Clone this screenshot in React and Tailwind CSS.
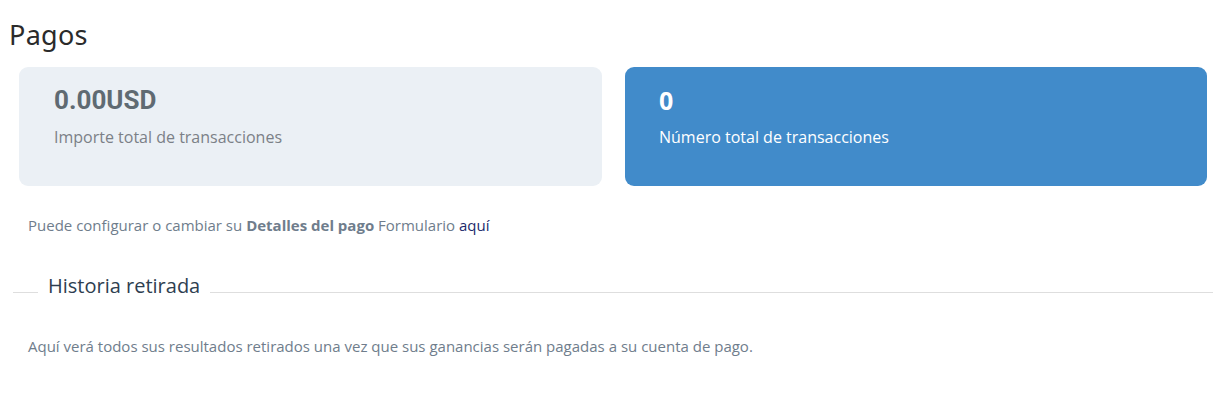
export default function App() {
  return (
    <div className="bg-white w-[1214px] h-[400px] overflow-hidden" style={{ fontFamily: '"Open Sans", sans-serif' }}>
      <h1 className="pl-[9px] pt-[18px] text-[27px] leading-[33px] text-[#2b2b2b] tracking-[0.3px]" style={{ fontFamily: '"Noto Sans", sans-serif' }}>
        Pagos
      </h1>
      <div className="flex gap-[23px] pl-[19px] pr-[7px] mt-[16px]">
        <div className="flex-1 h-[119px] rounded-[9px] bg-[#ebf0f5] pl-[35px] pt-[18px]">
          <div className="text-[26px] leading-[30px] font-bold text-[#5f6a72]" style={{ fontFamily: 'Roboto, sans-serif' }}>0.00USD</div>
          <div className="mt-[11px] text-[16px] leading-[22px] text-[#7b8087]">Importe total de transacciones</div>
        </div>
        <div className="flex-1 h-[119px] rounded-[9px] bg-[#418bca] pl-[34px] pt-[18px]">
          <div className="text-[25px] leading-[30px] font-bold text-white">0</div>
          <div className="mt-[11px] text-[16px] leading-[22px] text-white">Número total de transacciones</div>
        </div>
      </div>
      <p className="pl-[28px] mt-[29px] text-[15px] leading-[21px] text-[#6f7d8c]">
        Puede configurar o cambiar su <b className="font-bold">Detalles del pago</b> Formulario <a className="text-[#1c2a6b]">aquí</a>
      </p>
      <div className="flex items-center pl-[13px] pr-[1px] mt-[37px]">
        <div className="w-[25px] border-t border-[#dedede] mt-[12px]"></div>
        <span className="px-[10px] text-[20px] leading-[26px] text-[#2e3e50]">Historia retirada</span>
        <div className="flex-1 border-t border-[#dedede] mt-[12px]"></div>
      </div>
      <p className="pl-[28px] mt-[37px] text-[15px] leading-[21px] text-[#6f7d8c]">
        Aquí verá todos sus resultados retirados una vez que sus ganancias serán pagadas a su cuenta de pago.
      </p>
    </div>
  );
}
